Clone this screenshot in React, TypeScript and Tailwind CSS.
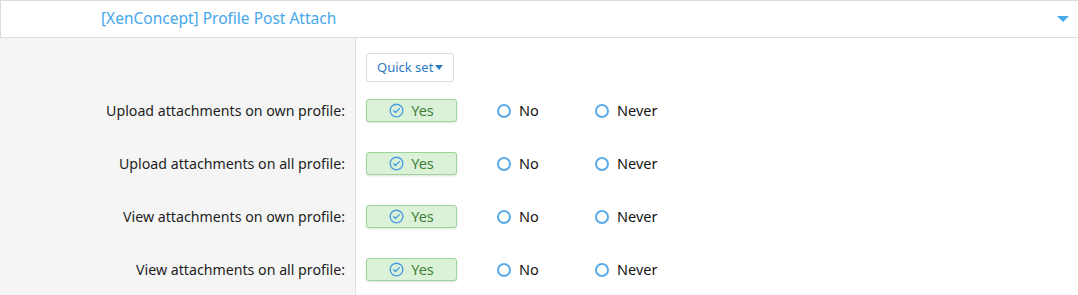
import { useState } from "react";

const ROWS = [
  "Upload attachments on own profile:",
  "Upload attachments on all profile:",
  "View attachments on own profile:",
  "View attachments on all profile:",
];

const OPTIONS = [
  { value: "yes", label: "Yes" },
  { value: "no", label: "No" },
  { value: "never", label: "Never" },
];

function CheckCircle() {
  return (
    <svg width="15" height="15" viewBox="0 0 16 16" fill="none" className="shrink-0">
      <circle cx="8" cy="8" r="6.75" stroke="#4a9ee0" strokeWidth="1.5" />
      <path d="M5 8.2l2 2 4-4.2" stroke="#4a9ee0" strokeWidth="1.5" strokeLinecap="round" strokeLinejoin="round" />
    </svg>
  );
}

export default function App() {
  const [values, setValues] = useState<string[]>(ROWS.map(() => "yes"));

  return (
    <div className="w-[1078px] h-[295px] bg-white overflow-hidden text-[#141414]" style={{ fontFamily: '"Segoe UI", "Noto Sans", "Open Sans", sans-serif' }}>
      {/* Header */}
      <div className="h-[38px] border-t border-l border-b border-[#dcdcdc] flex items-center pl-[100px] pr-[9px]">
        <span className="text-[15.5px] text-[#47a7eb] flex-1">[XenConcept] Profile Post Attach</span>
        <span className="w-0 h-0 border-l-[6px] border-r-[6px] border-t-[6px] border-l-transparent border-r-transparent border-t-[#47a7eb]"></span>
      </div>

      {/* Quick set row */}
      <div className="flex h-[46px]">
        <div className="w-[356px] shrink-0 bg-[#f5f5f5] border-r border-[#e2e2e2]"></div>
        <div className="pl-[10px] pt-[15px]">
          <button className="h-[29px] px-[10px] border border-[#dadada] rounded-[3px] bg-white text-[13px] text-[#2b7bc0] flex items-center gap-[2px]">
            Quick set
            <span className="w-0 h-0 border-l-[4px] border-r-[4px] border-t-[5px] border-l-transparent border-r-transparent border-t-[#2b7bc0]"></span>
          </button>
        </div>
      </div>

      {ROWS.map((label, i) => (
        <div key={label} className="flex h-[53px]">
          <div className="w-[356px] shrink-0 bg-[#f5f5f5] border-r border-[#e2e2e2] flex items-center justify-end pr-[10px] text-[14.2px] text-[#1e1e1e]">
            {label}
          </div>
          <div className="pl-[10px] flex items-center">
            {OPTIONS.map((o) =>
              values[i] === o.value ? (
                <button
                  key={o.value}
                  className="w-[91px] h-[23px] mr-[40px] border border-[#9bd59a] bg-[#dcf2d8] rounded-[3px] shadow-[0_1px_2px_rgba(0,0,0,0.12)] flex items-center justify-center gap-[7px] text-[14.5px] text-[#3f7f3b]"
                >
                  <CheckCircle />
                  {o.label}
                </button>
              ) : (
                <label
                  key={o.value}
                  onClick={() => setValues(values.map((x, j) => (j === i ? o.value : x)))}
                  className="w-[98px] flex items-center gap-[8px] text-[14.5px] cursor-pointer"
                >
                  <span className="w-[14px] h-[14px] rounded-full border-2 border-[#5aaae8] bg-white shrink-0"></span>
                  {o.label}
                </label>
              )
            )}
          </div>
        </div>
      ))}
    </div>
  );
}
